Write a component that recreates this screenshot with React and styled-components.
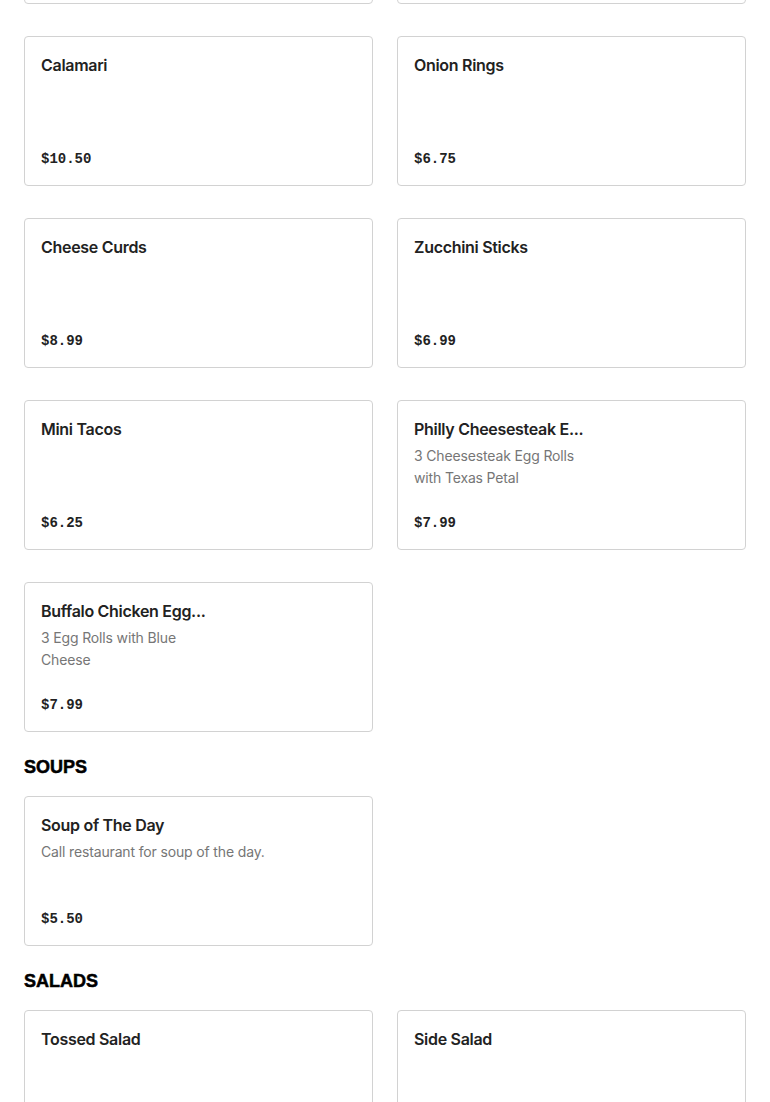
import styled, { createGlobalStyle } from "styled-components";

const GlobalStyle = createGlobalStyle`
  * {
    box-sizing: border-box;
  }
  body {
    margin: 0;
    background: #ffffff;
    font-family: "Inter", "Liberation Sans", sans-serif;
    color: #1f1f1f;
  }
`;

//메뉴 데이터 (첫 줄은 스크롤로 윗부분만 잘려 보임)
const sections = [
  {
    name: "APPETIZERS",
    hidden: true,
    items: [
      { title: "Mozzarella Sticks", price: "$7.50" },
      { title: "Jalapeno Poppers", price: "$7.25" },
      { title: "Calamari", price: "$10.50" },
      { title: "Onion Rings", price: "$6.75" },
      { title: "Cheese Curds", price: "$8.99" },
      { title: "Zucchini Sticks", price: "$6.99" },
      { title: "Mini Tacos", price: "$6.25" },
      {
        title: "Philly Cheesesteak Egg Rolls",
        desc: "3 Cheesesteak Egg Rolls\nwith Texas Petal",
        price: "$7.99",
      },
      {
        title: "Buffalo Chicken Egg Rolls",
        desc: "3 Egg Rolls with Blue\nCheese",
        price: "$7.99",
      },
    ],
  },
  {
    name: "SOUPS",
    items: [
      {
        title: "Soup of The Day",
        desc: "Call restaurant for soup of the day.",
        price: "$5.50",
      },
    ],
  },
  {
    name: "SALADS",
    items: [
      { title: "Tossed Salad", price: "$6.50" },
      { title: "Side Salad", price: "$3.99" },
    ],
  },
];

//제목 20자 넘으면 자르기
const shorten = (text) =>
  text.length > 20 ? text.slice(0, 20).trim() + "..." : text;

const App = () => {
  return (
    <>
      <GlobalStyle />
      <Page>
        {sections.map((section) => (
          <Section key={section.name}>
            {!section.hidden && <SectionTitle>{section.name}</SectionTitle>}
            <Grid>
              {section.items.map((item) => (
                <Card key={item.title}>
                  <Title>{shorten(item.title)}</Title>
                  {item.desc && <Desc>{item.desc}</Desc>}
                  <Price>{item.price}</Price>
                </Card>
              ))}
            </Grid>
          </Section>
        ))}
      </Page>
    </>
  );
};

const Page = styled.div`
  padding: 0 24px;
  margin-top: -146px;
`;

const Section = styled.section`
  display: flex;
  flex-direction: column;
`;

const SectionTitle = styled.h2`
  margin: 24px 0 18px;
  font-family: "Liberation Sans", "Arial", sans-serif;
  font-weight: 900;
  font-size: 18px;
  line-height: 22px;
  color: #000000;
  -webkit-text-stroke: 0.5px #000;
`;

const Grid = styled.div`
  display: grid;
  grid-template-columns: 1fr 1fr;
  column-gap: 24px;
  row-gap: 32px;
`;

const Card = styled.div`
  display: flex;
  flex-direction: column;
  height: 150px;
  padding: 16px;
  border: 1px solid #d2d2d2;
  border-radius: 4px;
  background: #ffffff;
`;

const Title = styled.p`
  margin: 0;
  font-weight: 600;
  font-size: 16px;
  line-height: 24px;
  letter-spacing: -0.3px;
  color: #222222;
  white-space: nowrap;
`;

const Desc = styled.p`
  margin: 4px 0 0;
  font-size: 14px;
  line-height: 22px;
  letter-spacing: -0.15px;
  color: #767676;
  white-space: pre-line;
`;

const Price = styled.p`
  margin: auto 0 0;
  font-family: "Liberation Mono", "Courier New", monospace;
  font-weight: 700;
  font-size: 14px;
  line-height: 20px;
  color: #222222;
`;

export default App;
